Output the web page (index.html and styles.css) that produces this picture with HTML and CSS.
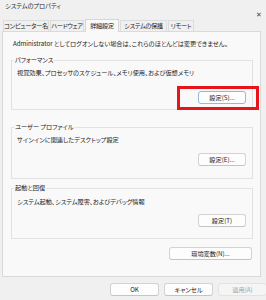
FILE: index.html
```html
<!DOCTYPE html>
<html lang="ja">
  <head>
    <meta charset="UTF-8" />
    <title>システムのプロパティ</title>
    <link rel="stylesheet" href="styles.css">
  </head>
  <body>
    <div class="window">
      <div class="titlebar">
        <span class="title">システムのプロパティ</span>
        <span class="close">✕</span>
      </div>

      <ul class="tabs">
        <li class="tab tab-1">コンピューター名</li>
        <li class="tab tab-2">ハードウェア</li>
        <li class="tab tab-3 active">詳細設定</li>
        <li class="tab tab-4">システムの保護</li>
        <li class="tab tab-5">リモート</li>
      </ul>

      <div class="panel">
        <p class="notice">Administrator としてログオンしない場合は、これらのほとんどは変更できません。</p>

        <fieldset class="group group-perf">
          <legend>パフォーマンス</legend>
          <p class="desc">視覚効果、プロセッサのスケジュール、メモリ使用、および仮想メモリ</p>
          <div class="btn-row">
            <span class="highlight-wrap">
              <button class="btn focused">設定(S)...</button>
              <span class="highlight"></span>
            </span>
          </div>
        </fieldset>

        <fieldset class="group group-profile">
          <legend>ユーザー プロファイル</legend>
          <p class="desc">サインインに関連したデスクトップ設定</p>
          <div class="btn-row">
            <button class="btn">設定(E)...</button>
          </div>
        </fieldset>

        <fieldset class="group group-startup">
          <legend>起動と回復</legend>
          <p class="desc">システム起動、システム障害、およびデバッグ情報</p>
          <div class="btn-row">
            <button class="btn">設定(T)</button>
          </div>
        </fieldset>

        <div class="btn-row env-row">
          <button class="btn btn-env">環境変数(N)...</button>
        </div>
      </div>

      <div class="footer">
        <button class="btn">OK</button>
        <button class="btn">キャンセル</button>
        <button class="btn disabled">適用(A)</button>
      </div>
    </div>
  </body>
</html>
```

FILE: styles.css
```css
/* Global */
* {
  margin: 0;
  padding: 0;
  box-sizing: border-box;
  font-family: "Noto Sans CJK JP", "Noto Sans", sans-serif;
  font-feature-settings: "palt";
}

body {
  background-color: #f0f0f0;
  color: #1b1b1b;
  font-size: 6.2px;
  width: 266px;
  height: 300px;
  overflow: hidden;
}

/* Title bar */
.titlebar {
  display: flex;
  justify-content: space-between;
  align-items: flex-start;
  height: 18px;
  padding: 0 4px 0 5px;
}

.title {
  line-height: 12px;
  color: #2b2b2b;
}

.close {
  margin-top: 8px;
  line-height: 12px;
  font-size: 7px;
  color: #444;
}

/* Tabs */
.tabs {
  display: flex;
  align-items: flex-end;
  gap: 1px;
  list-style: none;
  height: 13px;
  padding-left: 3px;
}

.tab {
  height: 11px;
  line-height: 10px;
  text-align: center;
  border: 1px solid #dcdcdc;
  border-bottom: none;
  background-color: #f0f0f0;
  white-space: nowrap;
  letter-spacing: -0.3px;
  overflow: hidden;
}

.tab.active {
  height: 13px;
  line-height: 12px;
  background-color: #f9f9f9;
  position: relative;
  top: 1px;
  border-color: #d6d6d6;
}

.tab-1 { width: 46px; }
.tab-2 { width: 34px; }
.tab-3 { width: 34px; }
.tab-4 { width: 47px; }
.tab-5 { width: 26px; }

/* Panel */
.panel {
  margin: 0 5px 0 2px;
  height: 246px;
  border: 1px solid #dadada;
  background-color: #f9f9f9;
  padding: 7px 7px 0 10px;
}

.notice {
  line-height: 10px;
  white-space: nowrap;
}

/* Group boxes */
.group {
  border: 1px solid #e2e2e2;
  margin: 0 0 0 -2px;
  padding: 0 6px 0 5px;
  min-width: 0;
}

.group legend {
  line-height: 10px;
  margin-left: -3px;
  padding: 0 1px;
}

.desc {
  line-height: 10px;
  white-space: nowrap;
}

.group-perf {
  margin-top: 6px;
  padding-bottom: 5px;
}

.group-perf .desc { margin-top: 3px; }
.group-perf .btn-row { margin-top: 13px; }

.group-profile {
  margin-top: 12px;
  padding-bottom: 12px;
}

.group-profile .desc { margin-top: 3px; }
.group-profile .btn-row { margin-top: 8px; }

.group-startup {
  margin-top: 4px;
  padding-bottom: 11px;
}

.group-startup .desc { margin-top: 4px; }
.group-startup .btn-row { margin-top: 7px; }

.btn-row {
  display: flex;
  justify-content: flex-end;
}

.env-row {
  margin-top: 8px;
  margin-right: 1px;
}

/* Buttons */
.btn {
  width: 48px;
  height: 13px;
  font-size: 6.2px;
  line-height: 11px;
  color: #1b1b1b;
  background-color: #fdfdfd;
  border: 1px solid #d3d3d3;
  border-bottom-color: #c4c4c4;
  border-radius: 3px;
}

.btn.focused {
  border-color: #8cbbe8;
}

.btn-env {
  width: 83px;
}

.btn.disabled {
  color: #a3a3a3;
  background-color: #f5f5f5;
  border-color: #e3e3e3;
}

/* Red annotation box */
.highlight-wrap {
  position: relative;
  display: flex;
}

.highlight {
  position: absolute;
  left: -21px;
  top: -5px;
  width: 82px;
  height: 24px;
  border: 3px solid #e8141c;
}

/* Footer */
.footer {
  display: flex;
  justify-content: flex-end;
  gap: 5px;
  padding-top: 6px;
  margin-right: -1px;
}

.footer .btn {
  width: 49px;
}
```
